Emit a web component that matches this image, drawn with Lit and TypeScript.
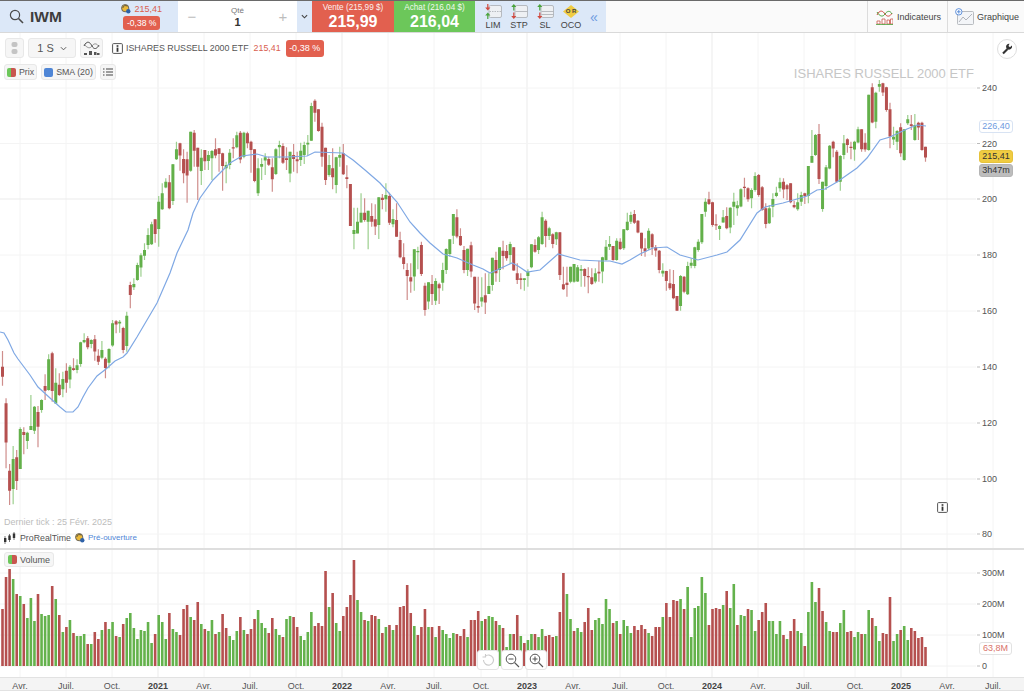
import { LitElement, html, css, svg } from "lit";
import { customElement } from "lit/decorators.js";

const A = `R140,170,93,197 R250,368,235,445 R452,512,432,555 G417,507,378,553 R412,483,390,510 G327,447,322,447 R336,345,322,403 G338,363,335,387 G318,330,225,330 G260,332,258,342 R276,320,258,382 G240,270,238,278 R198,212,163,240 G118,210,103,212 R100,213,95,245 G188,250,145,252 R194,225,160,228 G177,208,155,232 R152,188,130,218 G140,178,135,205 R145,150,115,152 G136,150,118,160 G67,132,65,140 G60,67,40,70 R55,82,48,88 G60,72,58,85 R58,95,45,122 R107,125,88,135 G90,113,63,118 R116,144,112,175 G87,128,85,145 G10,77,0,80 R4,14,0,40 G5,10,0,38 R24,90,20,100`;
const B = `G677,768,665,785 R585,615,575,655 G582,592,565,600 G525,570,518,572 G496,533,490,560 G480,497,460,510 G435,465,415,478 G403,463,395,465 R388,432,388,458 G335,417,318,470 G310,358,280,360 G275,292,265,295 R277,355,255,358 G223,333,222,345 G178,208,155,210 R160,197,158,242 R207,250,178,280 R208,257,185,338 G125,242,125,245 R128,182,120,230 R173,230,173,330 G203,243,178,285 R180,214,180,240 G195,213,183,240 G183,205,180,270 R178,197,145,205 R175,192,175,245 R190,228,188,302 G225,235,215,280 G188,225,177,238 R172,176,145,205 G136,172,125,175 R128,208,123,220 G128,200,125,205 R130,160,125,175 R155,180,152,248 R178,273,178,277 G235,310,205,318 G222,230,205,270 G202,212,190,255 R207,224,200,228 R232,268,205,305 G178,252,175,255 G165,172,152,205 R168,218,160,222 R205,210,172,240 G185,250,185,277 R195,207,162,245 R208,214,185,250 G182,210,158,228 G165,195,155,222 G158,163,135,195 G48,152,38,152 R32,68,28,95 R58,123,58,125 R110,200,98,230 R173,270,173,285 G225,255,195,260 R235,262,175,298 G202,285,200,310 G195,203,170,230 R190,253,162,255 R262,267,226,295`;
const C = `R42,168,42,168 G180,192,113,238 G155,190,113,190 G128,157,70,157 R128,150,85,155 G122,155,122,238 R138,155,100,170 R148,170,103,195 G82,165,82,207 R83,90,72,118 G75,88,40,125 R78,158,68,165 G147,163,118,172 R150,200,100,200 R210,262,185,265 R262,282,220,298 R300,318,280,390 R322,335,280,368 G238,320,238,362 G243,246,230,298 R225,312,215,318 R347,420,338,437 G337,395,337,418 R342,372,315,405 G333,392,325,405 R343,355,338,402 G300,338,278,362 G237,300,235,312 G208,252,208,260 G132,197,132,222 R142,200,118,205 R198,226,175,228 R240,300,228,310 G236,300,236,318 R226,305,215,322 R320,400,320,420 R408,413,320,428 G382,395,322,410 R376,398,310,432 G348,372,310,372 G263,345,263,362 R270,310,245,335 G232,300,232,336 R242,258,212,298 R243,265,225,272 G222,255,215,282 R232,302,232,302 R310,330,280,342 R325,330,310,358 G325,330,325,362 G305,318,298,350 G223,292,223,295 R225,245,208,248 G202,240,198,252 G142,222,125,225 R152,198,148,232 G175,198,170,210 R193,222,190,235 G187,208,185,225 R187,315,187,330 R343,358,290,360 R338,345,290,380 G290,335,290,340 G282,335,282,338 G292,335,285,336 G297,302,285,350 R297,318,295,350 R318,322,292,370 R322,342,295,345 G310,335,295,340 R305,310,272,335 G262,305,260,340 G230,270,210,272 G222,230,198,240 R228,270,228,272 G212,270,205,272 R215,237,205,240 G178,235,178,240 G155,180,128,182 G135,155,125,162 R132,158,120,162 R152,187,150,190 R188,235,188,258 R235,245,205,260 G182,235,175,240 R193,232,190,255 R232,242,225,260 R242,300,240,310`;
const D = `G572,580,550,590 R573,603,572,632 R610,625,568,630 R612,655,570,658 R648,692,648,692 G588,678,585,692 R590,635,588,640 G558,643,545,645 G548,557,535,565 G502,558,500,565 G485,510,478,515 G402,487,402,492 G365,395,355,410 R358,372,335,375 R367,435,365,440 R433,436,403,450 G438,447,435,480 G412,428,390,428 R408,445,382,448 G383,442,382,460 G365,380,338,435 G376,385,362,407 G328,380,325,382 R320,323,293,352 R325,358,322,365 G330,355,325,385 G288,330,277,335 R285,345,282,350 R322,390,318,392 R385,432,370,445 G385,430,375,432 G357,380,340,412 G338,348,320,352 G307,325,293,335 R305,328,295,355 R316,328,312,360 R310,367,310,370 R375,382,362,385 G367,388,340,392 G345,365,335,378 R340,348,338,372 G258,348,258,370 G228,248,150,248 G165,225,162,228 R162,297,132,312 G305,387,305,395 G262,318,255,330 G197,265,195,268 R185,205,182,232 R215,305,210,308 G228,305,225,332 G190,225,165,238 R178,195,175,218 R200,204,185,238 G185,208,182,242 G148,188,140,190 R148,208,148,215 R188,208,160,215 G44,210,44,212 R22,128,10,130 G38,125,35,145 G12,20,0,35 R10,38,8,48 R22,90,20,95 R88,170,68,205 G170,178,140,195 G153,185,150,210 R142,220,130,230 G148,240,148,242 G118,130,105,135 R133,138,105,150 G135,180,102,182 R128,142,125,180 R128,210,125,212 R200,232,200,245`;

const VOL = `R57 R89 R97 G87 R72 G70 R62 G48 G68 G45 R72 G52 G50 G51 R80 G67 R51 G34 R39 G46 R33 G30 G30 G32 R22 G22 R34 R27 G36 R44 G37 G44 R30 G29 R42 G48 G53 G38 G27 G36 G35 G44 G23 R32 G51 G44 G27 R53 G37 G34 R31 R57 R61 G49 R46 R64 G42 R37 G35 G46 R32 G34 R52 R38 G30 G26 G35 R49 G36 R32 R37 R47 G56 G43 G38 R33 R48 G37 G31 R29 G47 G50 R49 R39
G30 G26 G34 G54 R40 R43 R40 R95 G59 R73 G43 G35 R50 R59 R71 R106 G66 G54 R46 G45 R51 R50 G47 R33 G39 R41 G36 R41 R59 R60 R81 R53 G40 R31 R39 R57 G39 R39 G29 R40 G36 G32 G28
G33 R32 R30 R37 G29 R46 R46 R55 G45 R47 G50 G49 R45 G41 R38 G19 G32 R32 R51 G30 R23 G26 G32 R32 G29 G37 R30 R31 R29 G30 R54 R93 G72 G47 R35 G38 G34 R44 R58 R36 G46 G48 G42 G67 G57 R43 G45 R32 G46 G40 G33 R40 R36 R41 R37 G33 R30 R39 R39 G49 R63 R49 R66 R65 G67 R57 G79 G29 G58 G60 G89 G73 R41 R57 R58 R57 G61 R75 G58 G82 R41
G51 G50 R57 G56 G35 R46 R54 R63 G45 G45 G32 G45 R31 G27 R35 R47 G35 G33 R20 G54
G84 G64 R78 R55 G44 G35 R34 R34 G43 G56 R34 R35 G29 G34 R32 G32 G56 R48 G40 G25 R33 R32 R69 G25 G32 R36 G40 G26 R38 R35 R28 R29 R19`;

const SMA = "0,332 4,333 8,340 14,353 18,359 30,375 38,387 50,398 60,407 66,412 73,412 78,407 83,397 88,388 97,376 106,369 115,361 123,357 127,353 137,337 147,320 157,303 170,273 177,253 188,230 193,213 200,198 213,180 230,163 242,156 257,154 267,157 287,157 307,156 315,152 343,153 353,160 365,170 380,183 397,202 410,222 420,233 430,243 443,254 457,258 473,265 483,269 490,273 497,270 512,263 518,266 527,272 540,270 558,254 580,260 600,261 610,261 622,264 630,260 640,254 653,248 667,247 680,255 698,260 717,255 727,252 740,240 757,213 765,207 783,203 797,199 807,196 817,190 825,189 837,182 857,168 867,158 880,140 890,137 907,129 917,125 926,126";

const STEP = 3.55;
const xAt = (i: number) => 2.5 + STEP * i;

function buildCandles() {
  const paths = { wickR: "", wickG: "", bodyR: "", bodyG: "" };
  const sections: [string, number][] = [[A, 320], [B, 90], [C, 170], [D, 80]];
  let i = 0;
  for (const [text, y0] of sections) {
    for (const tok of text.trim().split(/\s+/)) {
      const red = tok[0] === "R";
      const [t, b, wt, wb] = tok.slice(1).split(",").map((n) => y0 + Number(n) / 3);
      const x = xAt(i);
      const wick = `M${(x - 0.6).toFixed(2)} ${wt.toFixed(1)}h1.2V${wb.toFixed(1)}h-1.2z`;
      const h = Math.max(b - t, 1.2);
      const body = `M${(x - 1.5).toFixed(2)} ${t.toFixed(1)}h3v${h.toFixed(1)}h-3z`;
      if (red) { paths.wickR += wick; paths.bodyR += body; }
      else { paths.wickG += wick; paths.bodyG += body; }
      i++;
    }
  }
  return paths;
}

function buildVolumes() {
  let red = "", green = "";
  VOL.trim().split(/\s+/).forEach((tok, i) => {
    const h = Number(tok.slice(1));
    const d = `M${(xAt(i) - 1.3).toFixed(2)} ${666 - h}h2.6v${h}h-2.6z`;
    if (tok[0] === "R") red += d; else green += d;
  });
  return { red, green };
}

const CANDLES = buildCandles();
const VOLS = buildVolumes();

const MONTHS: [number, string, boolean][] = [
  [20, "Avr.", false], [66, "Juil.", false], [112, "Oct.", false], [158, "2021", true],
  [204, "Avr.", false], [250, "Juil.", false], [296, "Oct.", false], [342, "2022", true],
  [388, "Avr.", false], [434, "Juil.", false], [481, "Oct.", false], [527, "2023", true],
  [573, "Avr.", false], [620, "Juil.", false], [666, "Oct.", false], [712, "2024", true],
  [758, "Avr.", false], [804, "Juil.", false], [855, "Oct.", false], [901, "2025", true],
  [947, "Avr.", false], [993, "Juil.", false],
];
const PRICES: [number, string][] = [
  [88, "240"], [143.5, "220"], [199, "200"], [255, "180"], [311, "160"],
  [367, "140"], [423, "120"], [479, "100"], [534, "80"],
];
const VTICKS: [number, string][] = [[573, "300M"], [604, "200M"], [635, "100M"], [666, "0"]];

const sessionIcon = html`<svg class="sess" viewBox="0 0 11 11" width="10" height="10">
  <circle cx="4.6" cy="4.6" r="4" fill="#eab93a" stroke="#5a5a5a" stroke-width="1"/>
  <path d="M2 4.5a3 3 0 0 1 5-2" fill="none" stroke="#3a3a3a" stroke-width=".8"/>
  <circle cx="8" cy="8" r="2.4" fill="#2f62a8"/>
</svg>`;

const infoIcon = html`<svg viewBox="0 0 11 11" width="11" height="11">
  <rect x=".6" y=".6" width="9.8" height="9.8" rx="1" fill="#fff" stroke="#555" stroke-width="1"/>
  <rect x="4.6" y="2.2" width="1.8" height="1.6" fill="#333"/>
  <rect x="4.6" y="4.6" width="1.8" height="4.2" fill="#333"/>
</svg>`;

const orderIcon = (kind: string) => html`<svg viewBox="0 0 18 15" width="18" height="15">
  <rect x="5" y="1.5" width="12.5" height="12" rx="1.5" fill="#eef0f3" stroke="#a9adb3" stroke-width=".8"/>
  <path d="M5.5 7.5h12" stroke="#a9adb3" stroke-width=".8" stroke-dasharray="${kind === "lim" ? "1.5 1" : "none"}"/>
  ${kind === "sl" ? svg`<path d="M5.5 10.5h12" stroke="#a9adb3" stroke-width=".8"/>` : ""}
  ${kind === "lim"
    ? svg`<path d="M3.2 0v3.6h-2l2.6 3 2.6-3h-2V0z" fill="#d0493f"/><path d="M3.2 15v-3.6h-2l2.6-3 2.6 3h-2V15z" fill="#4aa33c"/>`
    : svg`<path d="M3.2 6.6V3h-2l2.6-3 2.6 3h-2v3.6z" fill="#4aa33c"/><path d="M3.2 8.4V12h-2l2.6 3 2.6-3h-2V8.4z" fill="#d0493f"/>`}
</svg>`;

@customElement("app-root")
export class AppRoot extends LitElement {
  static styles = css`
    :host { display: block; width: 1024px; height: 693px; background: #fff; overflow: hidden;
      font-family: "Liberation Sans", Arial, sans-serif; color: #555; }
    svg { display: block; }
    .toolbar { display: flex; height: 33px; box-sizing: border-box; border-top: 1px solid #6a6a6a;
      border-bottom: 1px solid #d9d9d9; background: #fafafa; }
    .sym { width: 178px; background: #dce8f8; display: flex; align-items: center; padding: 0 18px 0 9px; box-sizing: border-box; }
    .sym-name { font-size: 15.5px; font-weight: 700; color: #3d3d3d; margin-left: 6px; flex: 1; }
    .sym-quote { display: flex; flex-direction: column; align-items: flex-end; gap: 2px; }
    .sym-price { display: flex; align-items: center; gap: 3px; font-size: 9px; line-height: 10px; color: #d9604f; margin-right: -2px; }
    .chip-red { background: #e2604f; color: #fff; border-radius: 3px; font-size: 8.6px; line-height: 14px; padding: 0 3.5px; }
    .qty { width: 119px; background: #fff; display: flex; align-items: center; justify-content: space-between;
      padding: 0 9px 0 9px; box-sizing: border-box; }
    .pm { color: #bdbdbd; font-size: 15px; width: 10px; text-align: center; }
    .qty-mid { display: flex; flex-direction: column; align-items: center; }
    .qty-label { font-size: 8px; line-height: 11px; color: #777; margin-top: 1px; }
    .qty-val { font-size: 11px; line-height: 13px; font-weight: 700; color: #333; }
    .drop { width: 15px; background: #dce8f8; display: flex; align-items: center; justify-content: center; }
    .side { display: flex; flex-direction: column; align-items: center; color: #fff; justify-content: center; }
    .sell { width: 82px; background: #e2604f; }
    .buy { width: 81px; background: #6cc75a; }
    .side-label { font-size: 8.2px; line-height: 10px; opacity: .9; }
    .side-val { font-size: 16px; line-height: 18px; font-weight: 700; }
    .orders { width: 131px; background: #dce8f8; display: flex; align-items: center; padding-left: 9px; box-sizing: border-box; gap: 8px; }
    .order { display: flex; flex-direction: column; align-items: center; width: 18px; font-size: 9px; line-height: 10px; color: #444; padding-top: 1px; }
    .order span { margin-top: 1px; }
    .dbl { color: #6f9be0; font-size: 14px; line-height: 14px; margin-left: 2px; }
    .spacer { flex: 1; }
    .tool { display: flex; align-items: center; box-sizing: border-box; border-left: 1px solid #dcdcdc; font-size: 9px; color: #444; }
    .ind { width: 80px; padding-left: 8px; gap: 4px; }
    .gra { width: 77px; padding-left: 7px; gap: 3px; }

    .chart { position: relative; height: 515px; border-bottom: 2px solid #dedede; }
    .volume { position: relative; height: 127px; }
    .axis { height: 14px; background: #f4f4f4; border-top: 1px solid #e2e2e2; border-bottom: 1px solid #e2e2e2; box-sizing: border-box; }
    .lbl { font-size: 9px; fill: #555; font-family: "Liberation Sans", Arial, sans-serif; }
    .year { font-weight: 700; fill: #444; }

    .legend { position: absolute; left: 5px; top: 5px; display: flex; flex-direction: column; gap: 6px; }
    .row { display: flex; align-items: center; gap: 4px; }
    .chip { display: flex; align-items: center; background: #f6f6f6; border: 1px solid #e8e8e8; border-radius: 3px; box-sizing: border-box; font-size: 8.8px; color: #555; }
    .grip { width: 19px; height: 20px; justify-content: center; }
    .tf { width: 48px; height: 20px; justify-content: center; gap: 6px; font-size: 11px; color: #555; }
    .style { width: 23px; height: 20px; justify-content: center; }
    .title { display: flex; align-items: center; gap: 3px; margin-left: 5px; font-size: 8.85px; color: #555; }
    .title-price { color: #d9604f; margin-left: 2px; }
    .title .chip-red { margin-left: 2px; line-height: 17px; font-size: 9px; }
    .row2 { margin-left: -1px; }
    .pill { height: 16px; padding: 0 2px; gap: 3px; }
    .swatch { width: 9px; height: 9px; border-radius: 2px; }
    .sw-pv { background: linear-gradient(90deg, #6cc75a 50%, #c8564f 50%); }
    .sw-sma { background: #4f86d6; }
    .watermark { position: absolute; right: 50px; top: 33px; font-size: 13px; color: #c6c6c6; }
    .wrench { position: absolute; left: 997px; top: 6px; width: 20px; height: 20px; border-radius: 50%; background: #fff;
      border: 1px solid #dedede; box-sizing: border-box; display: flex; align-items: center; justify-content: center; }
    .tag { position: absolute; left: 979px; width: 34px; height: 13px; box-sizing: border-box; border-radius: 3px; font-size: 9px; line-height: 11px;
      text-align: center; border: 1px solid transparent; }
    .t-sma { top: 87px; background: #fff; border-color: #d8e3f3; color: #6f9be0; }
    .t-price { top: 117px; background: #f0cc42; border-color: #e6c23a; color: #333; }
    .t-time { top: 131px; background: #bdbdbd; border-color: #b5b5b5; color: #333; }
    .t-vol { top: 92px; width: 33px; background: #fff; border-color: #e2e2e2; color: #d9736a; }
    .foot { position: absolute; left: 4px; top: 484px; display: flex; flex-direction: column; gap: 5px; }
    .tick { font-size: 9px; line-height: 10px; color: #bdbdbd; }
    .brand { display: flex; align-items: center; gap: 4px; font-size: 8.8px; line-height: 12px; color: #555; }
    .pre { color: #4f86d6; font-size: 8px; margin-left: -1px; }
    .info { position: absolute; left: 937px; top: 469px; }
    .vchip { position: absolute; left: 4px; top: 2px; height: 15px; padding: 0 3px; gap: 3px; font-size: 9px; }
    .zoom { position: absolute; left: 477px; top: 100px; display: flex; gap: 2px; }
    .zbtn { width: 22px; height: 20px; background: #fff; border: 1px solid #e4e4e4; border-radius: 3px; box-sizing: border-box;
      display: flex; align-items: center; justify-content: center; }
  `;

  render() {
    return html`
      <div class="toolbar">
        <div class="sym">
          <svg viewBox="0 0 15 15" width="15" height="15"><circle cx="6" cy="6" r="4.6" fill="none" stroke="#4a4a4a" stroke-width="1.2"/><path d="M9.5 9.5L14 14" stroke="#4a4a4a" stroke-width="1.6"/></svg>
          <span class="sym-name">IWM</span>
          <div class="sym-quote">
            <div class="sym-price">${sessionIcon}215,41</div>
            <div class="chip-red">-0,38 %</div>
          </div>
        </div>
        <div class="qty">
          <span class="pm">−</span>
          <div class="qty-mid"><span class="qty-label">Qté</span><span class="qty-val">1</span></div>
          <span class="pm">+</span>
        </div>
        <div class="drop"><svg viewBox="0 0 8 5" width="7" height="5"><path d="M1 1l3 3 3-3" fill="none" stroke="#444" stroke-width="1.3"/></svg></div>
        <div class="side sell"><span class="side-label">Vente (215,99 $)</span><span class="side-val">215,99</span></div>
        <div class="side buy"><span class="side-label">Achat (216,04 $)</span><span class="side-val">216,04</span></div>
        <div class="orders">
          <div class="order">${orderIcon("lim")}<span>LIM</span></div>
          <div class="order">${orderIcon("stp")}<span>STP</span></div>
          <div class="order">${orderIcon("sl")}<span>SL</span></div>
          <div class="order">
            <svg viewBox="0 0 18 15" width="18" height="15">
              <path d="M9 1l8 6.5L9 14 1 7.5z" fill="#f0cc42"/>
              <text x="9" y="9.3" text-anchor="middle" font-size="6" font-weight="700" fill="#444" font-family="Liberation Sans">O R</text>
            </svg>
            <span>OCO</span>
          </div>
          <span class="dbl">«</span>
        </div>
        <div class="spacer"></div>
        <div class="tool ind">
          <svg viewBox="0 0 17 16" width="17" height="16">
            <path d="M1 6c3-6 6-4 8-1s5 3 7-1" fill="none" stroke="#d0493f" stroke-width="1"/>
            <path d="M1 3c3 5 6 5 8 2s5-4 7 0" fill="none" stroke="#4aa33c" stroke-width="1"/>
            <path d="M1 12h3v3H1zM6 10h3v5H6zM11 11h2.5v4H11zM14.5 10H17v5h-2.500z" fill="#fff" stroke="#c9584f" stroke-width=".8"/>
            <path d="M0 15.500h17" stroke="#4aa33c" stroke-width=".8"/>
          </svg>
          <span>Indicateurs</span>
        </div>
        <div class="tool gra">
          <svg viewBox="0 0 19 17" width="19" height="17">
            <rect x="2.500" y="3.500" width="16" height="13" rx="1" fill="#f3f5f8" stroke="#a9adb3" stroke-width=".8"/>
            <path d="M4 14l4-5 3 3 6-6" fill="none" stroke="#a9adb3" stroke-width=".9"/>
            <circle cx="3.800" cy="3.800" r="3.200" fill="#fff" stroke="#4f86d6" stroke-width=".9"/>
            <path d="M2 3.800h3.600M3.800 2v3.600" stroke="#4f86d6" stroke-width=".9"/>
          </svg>
          <span>Graphique</span>
        </div>
      </div>

      <div class="chart">
        <svg viewBox="0 33 1024 515" width="1024" height="515">
          ${MONTHS.map(([x, , y]) => svg`<path d="M${x} 33V548" stroke="${y ? "#ebebeb" : "#f4f4f4"}" stroke-width="1"/>`)}
          ${PRICES.map(([y, t]) => svg`
            <path d="M0 ${y}H976" stroke="${t === "200" || t === "100" ? "#ebebeb" : "#f4f4f4"}" stroke-width="1"/>
            <path d="M977 ${y}h3" stroke="#bbb" stroke-width="1"/>
            <text class="lbl" x="982" y="${y + 3.2}">${t}</text>`)}
          <path d="${CANDLES.wickR}" fill="#cf8e8c"/>
          <path d="${CANDLES.wickG}" fill="#9ccf8e"/>
          <path d="${CANDLES.bodyR}" fill="#b5504f"/>
          <path d="${CANDLES.bodyG}" fill="#63b04a"/>
          <polyline points="${SMA}" fill="none" stroke="#7fa8e4" stroke-width="1.200"/>
        </svg>
        <div class="legend">
          <div class="row">
            <div class="chip grip">
              <svg viewBox="0 0 7 12" width="7" height="12"><rect x=".5" y="0" width="6" height="5" rx="2" fill="#c4c4c4"/><rect x=".5" y="7" width="6" height="5" rx="2" fill="#c4c4c4"/></svg>
            </div>
            <div class="chip tf">1 S <svg viewBox="0 0 8 5" width="7" height="5"><path d="M1 1l3 3 3-3" fill="none" stroke="#555" stroke-width="1.100"/></svg></div>
            <div class="chip style">
              <svg viewBox="0 0 17 15" width="17" height="15">
                <path d="M1 5c3-6 6-4 8 0s5 3 7-1" fill="none" stroke="#444" stroke-width="1"/>
                <path d="M1 3c3 4 6 5 8 2s5-3 7 1" fill="none" stroke="#777" stroke-width=".8"/>
                <path d="M1 12h3v2H1zM6 10h3v4H6zM11 11h2.500v3H11zM14 12h2.500v2H14z" fill="#555"/>
              </svg>
            </div>
            <div class="title">
              ${infoIcon}
              <span>ISHARES RUSSELL 2000 ETF</span>
              <span class="title-price">215,41</span>
              <span class="chip-red">-0,38 %</span>
            </div>
          </div>
          <div class="row row2">
            <div class="chip pill"><i class="swatch sw-pv"></i>Prix</div>
            <div class="chip pill"><i class="swatch sw-sma"></i>SMA (20)</div>
            <div class="chip pill">
              <svg viewBox="0 0 10 8" width="10" height="8"><path d="M3 1h7M3 4h7M3 7h7" stroke="#444" stroke-width="1"/><path d="M0 1h1.500M0 4h1.500M0 7h1.500" stroke="#444" stroke-width="1.200"/></svg>
            </div>
          </div>
        </div>
        <div class="watermark">ISHARES RUSSELL 2000 ETF</div>
        <div class="wrench">
          <svg viewBox="0 0 12 12" width="12" height="12"><path d="M2 10.500L6.500 6" stroke="#333" stroke-width="2.200"/><path d="M10.800 2.500a3 3 0 1 1-2.300-1.800L7.500 3l1.500 1.300z" fill="#333"/></svg>
        </div>
        <div class="tag t-sma">226,40</div>
        <div class="tag t-price">215,41</div>
        <div class="tag t-time">3h47m</div>
        <div class="foot">
          <div class="tick">Dernier tick : 25 Févr. 2025</div>
          <div class="brand">
            <svg viewBox="0 0 12 12" width="12" height="12"><path d="M1 4v8M5.500 2v8M10 0v8" stroke="#555" stroke-width=".8"/><rect x="0" y="6" width="2.400" height="4" fill="#333"/><rect x="4.300" y="3.500" width="2.400" height="4.500" fill="#333"/><rect x="8.800" y="1.500" width="2.400" height="4.500" fill="#333"/></svg>
            <span>ProRealTime</span>
            ${sessionIcon}
            <span class="pre">Pré-ouverture</span>
          </div>
        </div>
        <div class="info">${infoIcon}</div>
      </div>

      <div class="volume">
        <svg viewBox="0 550 1024 127" width="1024" height="127">
          ${MONTHS.map(([x, , y]) => svg`<path d="M${x} 550V677" stroke="${y ? "#ebebeb" : "#f4f4f4"}" stroke-width="1"/>`)}
          ${VTICKS.map(([y, t]) => svg`
            <path d="M0 ${y}H976" stroke="#f2f2f2" stroke-width="1"/>
            <path d="M977 ${y}h3" stroke="#bbb" stroke-width="1"/>
            <text class="lbl" x="982" y="${y + 3.2}">${t}</text>`)}
          <path d="${VOLS.red}" fill="#b5504f"/>
          <path d="${VOLS.green}" fill="#64b24c"/>
        </svg>
        <div class="chip vchip"><i class="swatch sw-pv"></i>Volume</div>
        <div class="tag t-vol">63,8M</div>
        <div class="zoom">
          <div class="zbtn"><svg viewBox="0 0 14 14" width="14" height="14"><path d="M4 3.500a5 5 0 1 1-1.500 3.500" fill="none" stroke="#ccc" stroke-width="1.100"/><path d="M4.500 1v3H1.500" fill="none" stroke="#ccc" stroke-width="1.100"/></svg></div>
          <div class="zbtn"><svg viewBox="0 0 15 15" width="15" height="15"><circle cx="6" cy="6" r="4.800" fill="none" stroke="#555" stroke-width="1"/><path d="M3.500 6h5M9.500 9.500l4.500 4.500" stroke="#555" stroke-width="1.100"/></svg></div>
          <div class="zbtn"><svg viewBox="0 0 15 15" width="15" height="15"><circle cx="6" cy="6" r="4.800" fill="none" stroke="#555" stroke-width="1"/><path d="M3.500 6h5M6 3.500v5M9.500 9.500l4.500 4.500" stroke="#555" stroke-width="1.100"/></svg></div>
        </div>
      </div>

      <div class="axis">
        <svg viewBox="0 678 1024 12" width="1024" height="12">
          ${MONTHS.map(([x, t, y]) => svg`<text class="lbl ${y ? "year" : ""}" x="${x}" y="689" text-anchor="middle">${t}</text>`)}
        </svg>
      </div>
    `;
  }
}
